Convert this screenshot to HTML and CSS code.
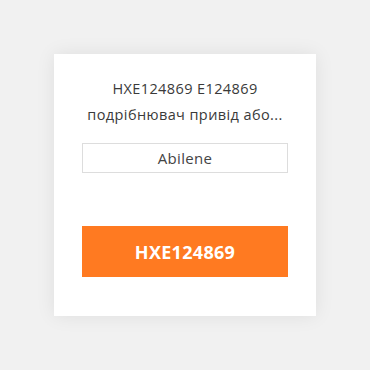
FILE: index.html
```html
<!DOCTYPE html>
<html>
<head>
<meta charset="utf-8">
<link rel="stylesheet" href="styles.css">
</head>
<body>
<div class="card">
  <div class="title">HXE124869 E124869 подрібнювач привід або...</div>
  <div class="brand">Abilene</div>
  <a class="btn">HXE124869</a>
</div>
</body>
</html>
```
FILE: styles.css
```css
html, body { margin: 0; padding: 0; }
body {
  width: 370px;
  height: 370px;
  background: #f1f1f1;
  font-family: "Open Sans", "DejaVu Sans", sans-serif;
  padding: 54px;
  box-sizing: border-box;
}
.card {
  width: 262px;
  height: 262px;
  background: #fff;
  box-shadow: 0 0 18px rgba(0,0,0,0.08);
  box-sizing: border-box;
  padding: 22px 28px 0;
  display: flex;
  flex-direction: column;
}
.title {
  text-align: center;
  font-size: 14.5px;
  letter-spacing: 0.4px;
  line-height: 26px;
  color: #3a3a3a;
  padding: 0 2px;
}
.brand {
  margin-top: 15px;
  height: 30px;
  border: 1px solid #ddd;
  box-sizing: border-box;
  text-align: center;
  line-height: 28px;
  font-size: 15px;
  letter-spacing: 0.3px;
  color: #444;
}
.btn {
  margin-top: 53px;
  height: 51px;
  background: #ff7a21;
  color: #fff;
  font-weight: 700;
  font-size: 18px;
  letter-spacing: 0.3px;
  display: flex;
  align-items: center;
  justify-content: center;
}
```
